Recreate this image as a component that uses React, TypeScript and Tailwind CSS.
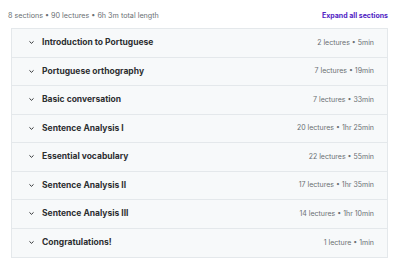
import React from 'react';

const sections = [
  { title: 'Introduction to Portuguese', meta: '2 lectures • 5min' },
  { title: 'Portuguese orthography', meta: '7 lectures • 19min' },
  { title: 'Basic conversation', meta: '7 lectures • 33min' },
  { title: 'Sentence Analysis I', meta: '20 lectures • 1hr 25min' },
  { title: 'Essential vocabulary', meta: '22 lectures • 55min' },
  { title: 'Sentence Analysis II', meta: '17 lectures • 1hr 35min' },
  { title: 'Sentence Analysis III', meta: '14 lectures • 1hr 10min' },
  { title: 'Congratulations!', meta: '1 lecture • 1min' },
];

function Chevron() {
  return (
    <svg width="7" height="7" viewBox="0 0 10 10" className="text-[#2d2f31]">
      <path d="M2.5 3.8 L5 6.2 L7.5 3.8" fill="none" stroke="currentColor" strokeWidth="1.4" strokeLinecap="round" strokeLinejoin="round" />
    </svg>
  );
}

export default function App() {
  return (
    <div className="w-[400px] h-[265px] bg-white pl-[8px] pr-[12px] pt-[10px]" style={{ fontFamily: 'Inter, "Liberation Sans", sans-serif' }}>
      <div className="flex items-center justify-between h-[13px] mb-[5px]">
        <span className="text-[7.2px] text-[#6a6f73]">8 sections • 90 lectures • 6h 3m total length</span>
        <span className="text-[7px] font-bold text-[#5022c3]">Expand all sections</span>
      </div>
      <div className="ml-[3px] border border-[#e4e8eb]">
        {sections.map((s, i) => (
          <div
            key={s.title}
            className={`flex items-center h-[28.5px] bg-[#f7f9fa] pl-[16px] pr-[13px] ${i < sections.length - 1 ? 'border-b border-[#e4e8eb]' : ''}`}
          >
            <Chevron />
            <span className="ml-[7px] text-[8.5px] font-bold text-[#2d2f31] flex-1">{s.title}</span>
            <span className="text-[7px] text-[#6a6f73]">{s.meta}</span>
          </div>
        ))}
      </div>
    </div>
  );
}
